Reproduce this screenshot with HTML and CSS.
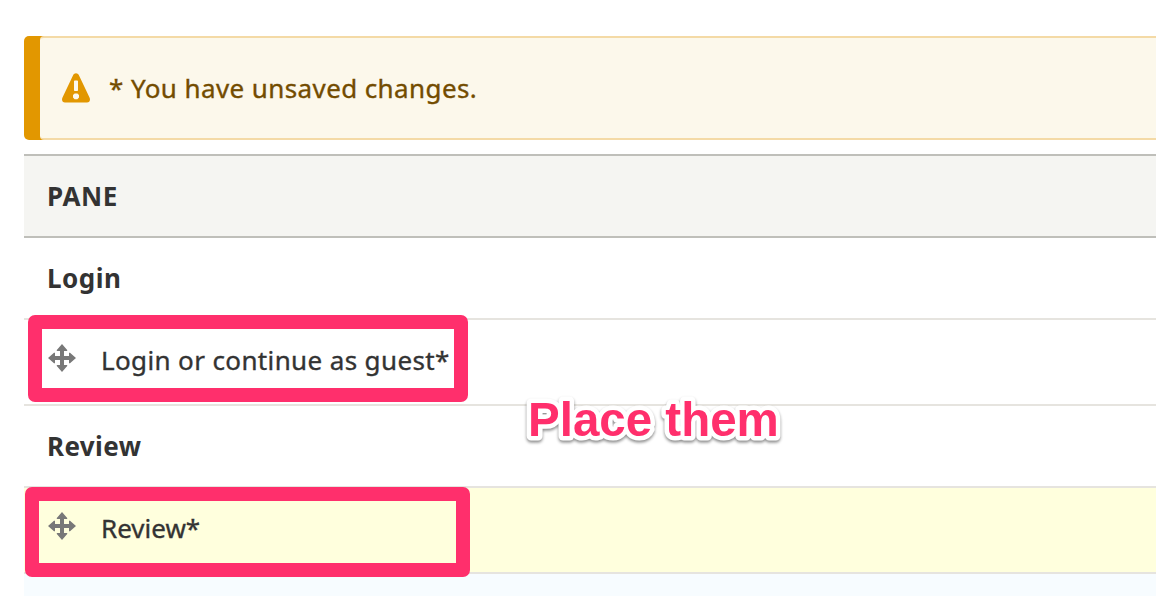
FILE: index.html
```html
<!DOCTYPE html>
<html lang="en">
<head>
<meta charset="utf-8">
<title>Checkout flow panes</title>
<link rel="stylesheet" href="styles.css">
</head>
<body>
<svg width="0" height="0" class="defs">
  <symbol id="move" viewBox="0 0 28 28">
    <path d="M14 0 19.2 6V7H16V12H21V8.8H22L28 14 22 19.2H21V16H16V21H19.2V22L14 28 8.8 22V21H12V16H7V19.2H6L0 14 6 8.8H7V12H12V7H8.8V6Z"/>
  </symbol>
</svg>
<main class="page">
  <div class="message">
    <div class="message-body">
      <svg class="warning" viewBox="0 0 28 30">
        <path fill="#e29700" d="M14 0.3C15.2 0.3 16.2 1 16.8 2L27.5 24.5C28.7 27 27.5 29.5 25 29.5H3C.5 29.5-.7 27 .5 24.5L11.2 2C11.8 1 12.8.3 14 .3Z"/>
        <path fill="#fcf8eb" d="M12.8 7.5H15.2Q16 7.5 16 8.3V17.2Q16 18 15.2 18H12.8Q12 18 12 17.2V8.3Q12 7.5 12.8 7.5ZM12.6 20.5H15.4L17 22V24.5L15.4 26.3H12.6L11 24.5V22Z"/>
      </svg>
      <span class="message-text">* You have unsaved changes.</span>
    </div>
  </div>
  <div class="table">
    <div class="row head"><span class="t-pane">PANE</span></div>
    <div class="row region"><span class="t-login">Login</span></div>
    <div class="row item">
      <svg class="move"><use href="#move"/></svg>
      <span class="t-guest">Login or continue as guest*</span>
      <div class="mark mark-guest"></div>
    </div>
    <div class="row region"><span class="t-region">Review</span></div>
    <div class="row item changed">
      <svg class="move"><use href="#move"/></svg>
      <span class="t-review">Review*</span>
      <div class="mark mark-review"></div>
    </div>
    <div class="row next"></div>
  </div>
  <svg class="note" width="280" height="64"><text x="12" y="44">Place them</text></svg>
</main>
</body>
</html>
```
FILE: styles.css
```css
* { box-sizing: border-box; }
body {
  margin: 0;
  background: #fff;
  color: #333;
  font: 26px/36px "Noto Sans", "Open Sans", sans-serif;
  white-space: nowrap;
  overflow: hidden;
}
.defs { position: absolute; }
.page {
  position: relative;
  height: 596px;
  padding: 36px 0 0 24px;
  overflow: hidden;
}
.message {
  height: 104px;
  padding-left: 16px;
  background: #e29700;
  border-radius: 5px 0 0 5px;
}
.message-body {
  display: flex;
  align-items: center;
  height: 104px;
  padding-left: 22px;
  background: #fcf8eb;
  border: solid #f4daa6;
  border-width: 2px 0;
  border-radius: 4px 0 0 4px;
  color: #734c00;
}
.warning { width: 28px; height: 30px; margin-right: 19px; }
.message-text { letter-spacing: 0.4px; -webkit-text-stroke: 0.35px currentColor; }
.table { margin-top: 14px; }
.row {
  position: relative;
  display: flex;
  align-items: center;
  height: 82px;
  padding-left: 24px;
  border-bottom: 2px solid #e6e4df;
}
.head {
  height: 84px;
  background: #f5f5f2;
  border-top: 2px solid #bfbfba;
  border-bottom-color: #bfbfba;
  font-weight: 700;
}
.region { font-weight: 700; }
.head, .region { padding-left: 23px; }
.t-pane { letter-spacing: 0.6px; }
.t-login { letter-spacing: 0.5px; }
.t-region { letter-spacing: 0.4px; }
.item { height: 86px; padding-bottom: 4px; }
.t-guest, .t-review { -webkit-text-stroke: 0.35px currentColor; }
.t-guest { letter-spacing: 0.37px; }
.changed { background: #ffffdd; }
.next { background: #f7fcff; border: 0; }
.move {
  width: 28px;
  height: 28px;
  margin: -4px 25px 0 0;
  fill: #787878;
}
.mark {
  position: absolute;
  border: 14px solid #ff2f6c;
  border-radius: 7px;
}
.mark-guest { left: 4px; top: -5px; width: 440px; height: 87px; }
.mark-review { left: 1px; top: -1px; width: 445px; height: 90px; z-index: 1; }
.note {
  position: absolute;
  left: 516px;
  top: 392px;
  font: bold 47.5px "Liberation Sans", Arial, sans-serif;
  fill: #ff2f6c;
  stroke: #fff;
  stroke-width: 9px;
  stroke-linejoin: round;
  paint-order: stroke fill;
  filter: drop-shadow(0 2px 1.5px rgba(0, 0, 0, 0.45));
}
```
